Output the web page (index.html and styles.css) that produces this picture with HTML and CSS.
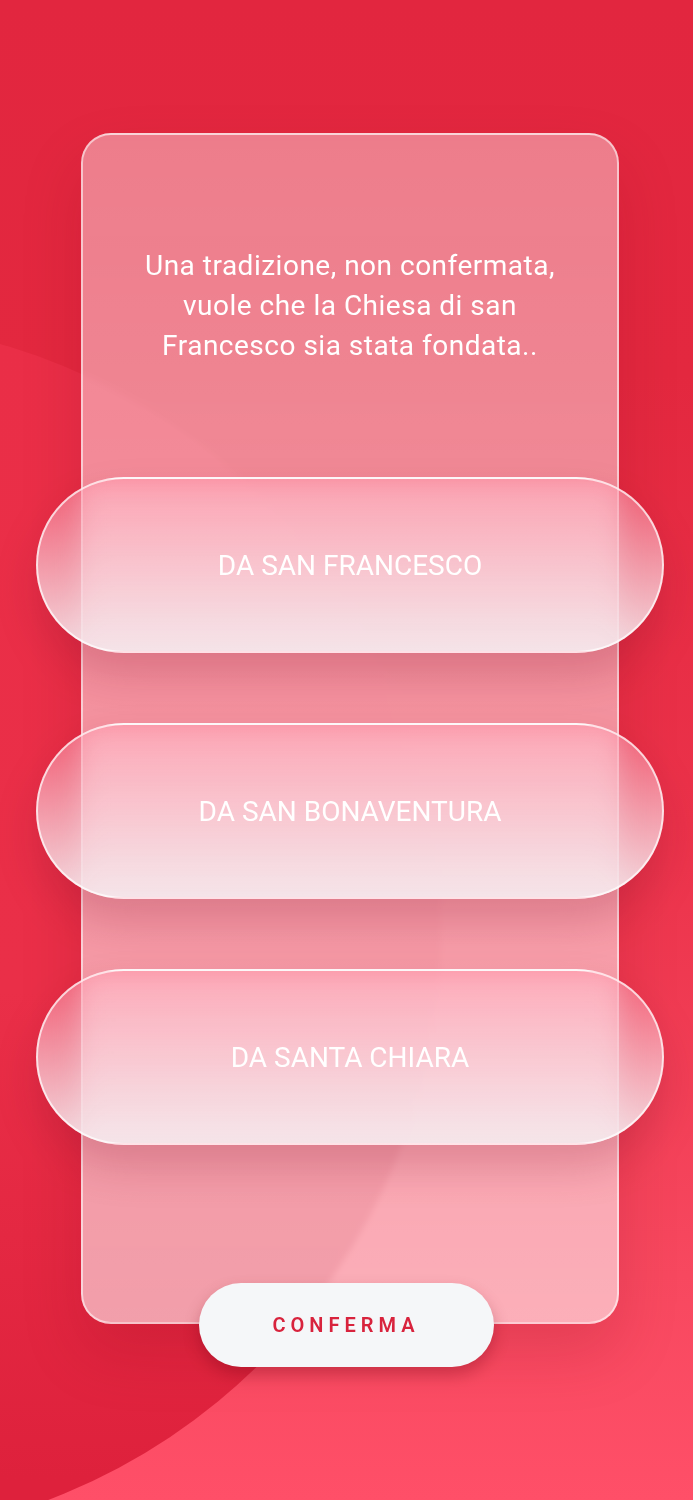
FILE: index.html
```html
<!DOCTYPE html>
<html lang="it">
<head>
    <meta charset="UTF-8">
    <meta name="viewport" content="width=device-width, initial-scale=1.0">
    <title>Quiz</title>
    <link rel="stylesheet" href="styles.css">
</head>
<body>
    <div class="screen">
        <div class="blob"></div>
        <section class="quiz-card">
            <p class="question">Una tradizione, non confermata,<br>vuole che la Chiesa di san<br>Francesco sia stata fondata..</p>
            <div class="answers">
                <button class="answer">DA SAN FRANCESCO</button>
                <button class="answer">DA SAN BONAVENTURA</button>
                <button class="answer">DA SANTA CHIARA</button>
            </div>
            <button class="confirm">CONFERMA</button>
        </section>
    </div>
</body>
</html>
```

FILE: styles.css
```css
body {
    margin: 0;
    font-family: Roboto, 'Open Sans', sans-serif;
}
.screen {
    position: relative;
    width: 693px;
    height: 1500px;
    overflow: hidden;
    box-sizing: border-box;
    padding-top: 133px;
    background: linear-gradient(180deg, #e2263f 0%, #e3283f 25%, #eb324a 55%, #f7485f 85%, #ff4f68 100%);
}
/* big soft circle behind the card */
.blob {
    position: absolute;
    left: -779px;
    top: 320px;
    width: 1220px;
    height: 1220px;
    border-radius: 50%;
    background: linear-gradient(180deg, #ea2e47 0%, #ea2f48 55%, #de213c 95%);
}
.quiz-card {
    position: relative;
    width: 538px;
    margin-left: 81px;
    box-sizing: border-box;
    padding-top: 111px;
    border: 2px solid rgba(255, 255, 255, 0.55);
    border-radius: 30px;
    background: linear-gradient(180deg, rgba(255, 255, 255, 0.4), rgba(255, 255, 255, 0.56));
    backdrop-filter: blur(3px);
    box-shadow: 0 30px 60px rgba(140, 10, 30, 0.18);
    display: flex;
    flex-direction: column;
    align-items: center;
}
.question {
    margin: 0;
    color: #fff;
    font-size: 28px;
    line-height: 40px;
    letter-spacing: 0.5px;
    text-align: center;
}
.answers {
    width: 628px;
    margin-top: 111px;
    display: flex;
    flex-direction: column;
    gap: 70px;
}
.answer {
    height: 176px;
    border: 2px solid rgba(255, 255, 255, 0.7);
    border-radius: 88px;
    background: linear-gradient(180deg, rgba(255, 135, 158, 0.5), rgba(244, 232, 236, 0.92));
    backdrop-filter: blur(14px);
    box-shadow: 0 22px 40px rgba(130, 20, 45, 0.22);
    color: #fff;
    font-family: inherit;
    font-size: 28px;
    font-weight: 400;
}
.confirm {
    width: 295px;
    height: 84px;
    margin-top: 138px;
    margin-right: 7px;
    margin-bottom: -45px;
    padding-left: 5px;
    border: none;
    border-radius: 42px;
    background: #f5f7f9;
    box-shadow: 0 8px 16px rgba(110, 0, 20, 0.3);
    color: #d8233d;
    font-family: inherit;
    font-size: 20px;
    font-weight: 600;
    letter-spacing: 5px;
}
```
